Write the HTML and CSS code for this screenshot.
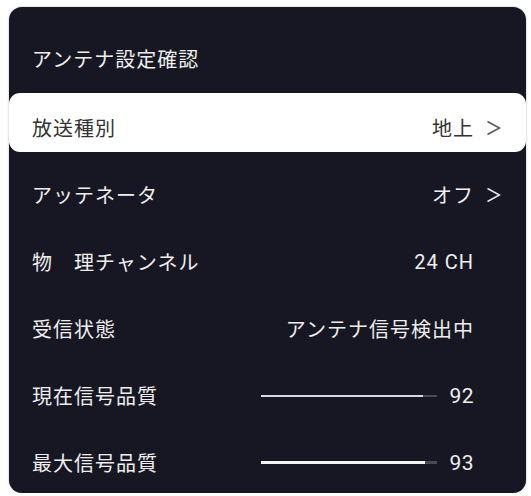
FILE: index.html
```html
<!DOCTYPE html>
<html lang="ja">
<head>
<meta charset="utf-8">
<link rel="stylesheet" href="styles.css">
</head>
<body>
<div class="panel">
  <div class="title">アンテナ設定確認</div>
  <div class="row selected">
    <span class="label">放送種別</span>
    <span class="value">地上</span>
    <span class="chev"><svg width="15" height="16" viewBox="0 0 15 16"><polyline points="1.5,1.5 13.5,8 1.5,14.5" fill="none" stroke="currentColor" stroke-width="1.5"/></svg></span>
  </div>
  <div class="row">
    <span class="label">アッテネータ</span>
    <span class="value">オフ</span>
    <span class="chev"><svg width="15" height="16" viewBox="0 0 15 16"><polyline points="1.5,1.5 13.5,8 1.5,14.5" fill="none" stroke="currentColor" stroke-width="1.5"/></svg></span>
  </div>
  <div class="row">
    <span class="label">物　理チャンネル</span>
    <span class="value">24 CH</span>
    <span class="chev"></span>
  </div>
  <div class="row">
    <span class="label">受信状態</span>
    <span class="value">アンテナ信号検出中</span>
    <span class="chev"></span>
  </div>
  <div class="row">
    <span class="label">現在信号品質</span>
    <span class="bar thin"><span class="fill" style="width:92%"></span></span>
    <span class="value num">92</span>
    <span class="chev"></span>
  </div>
  <div class="row">
    <span class="label">最大信号品質</span>
    <span class="bar thick"><span class="fill" style="width:93%"></span></span>
    <span class="value num">93</span>
    <span class="chev"></span>
  </div>
</div>
</body>
</html>
```

FILE: styles.css
```css
html, body {
  margin: 0;
  padding: 0;
  background: #ffffff;
}
body {
  padding: 7px 4px 0 9px;
  font-family: Roboto, "Noto Sans CJK JP", sans-serif;
}
.panel {
  width: 517px;
  height: 486px;
  box-sizing: border-box;
  background: #171723;
  border-radius: 13px;
  box-shadow: 0 0 2px rgba(0,0,0,0.35);
  display: flex;
  flex-direction: column;
  gap: 8px;
}
.title {
  color: #eeeeee;
  font-size: 20px;
  letter-spacing: 1px;
  line-height: 24px;
  padding: 41px 23px 0;
  margin-bottom: 13px;
}
.row {
  height: 59px;
  box-sizing: border-box;
  padding: 10px 25px 0 23px;
  display: flex;
  align-items: center;
  color: #eeeeee;
  font-size: 20px;
  letter-spacing: 1px;
  border-radius: 11px;
}
.row.selected {
  background: #ffffff;
  color: #333333;
}
.label {
  flex: 1;
  white-space: pre;
}
.value {
  white-space: nowrap;
}
.num {
  font-size: 21px;
  letter-spacing: 0.5px;
}
.chev {
  width: 27px;
  display: flex;
  justify-content: flex-end;
  align-items: center;
  color: #e8e8e8;
}
.selected .chev {
  color: #555555;
}
.bar {
  width: 176px;
  background: #4a4a55;
  margin-right: 12px;
  display: flex;
}
.bar.thin { height: 2px; }
.bar.thick { height: 3px; }
.fill {
  background: #d8d8dc;
  height: 100%;
}
.bar.thick .fill { background: #f4f4f4; }
```
